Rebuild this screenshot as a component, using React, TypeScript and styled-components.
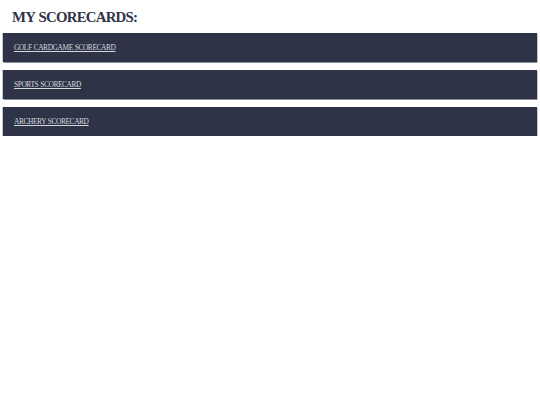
import styled, { createGlobalStyle } from "styled-components";

const GlobalStyle = createGlobalStyle`
  body {
    margin: 0;
    background: #ffffff;
    font-family: "Liberation Serif", "Times New Roman", serif;
  }
`;

const cards = ["Golf Cardgame Scorecard", "Sports Scorecard", "Archery Scorecard"];

const App = () => {
  return (
    <>
      <GlobalStyle />
      <Page>
        <Title>MY SCORECARDS:</Title>
        <CardList>
          {cards.map((name) => (
            <Card key={name}>
              <CardLink href="#">{name}</CardLink>
            </Card>
          ))}
        </CardList>
      </Page>
    </>
  );
};

const Page = styled.div`
  padding: 0 3px;
`;

const Title = styled.h1`
  margin: 0;
  padding: 9px 0 0 9px;
  height: 24px;
  font-size: 14.8px;
  letter-spacing: -0.75px;
  word-spacing: 1px;
  font-weight: bold;
  color: #2e3348;
`;

const CardList = styled.div`
  display: flex;
  flex-direction: column;
  gap: 8px;
`;

const Card = styled.div`
  display: flex;
  align-items: center;
  height: 29px;
  padding: 0 11px;
  background: #2e3348;
  box-shadow: 0.5px 1px 0 #8a8e99, -0.5px 0 0 #8a8e99;
`;

const CardLink = styled.a`
  font-size: 7.4px;
  letter-spacing: -0.4px;
  word-spacing: 0.5px;
  text-transform: uppercase;
  color: #d4d6dc;
  text-decoration: underline;
`;

export default App;
